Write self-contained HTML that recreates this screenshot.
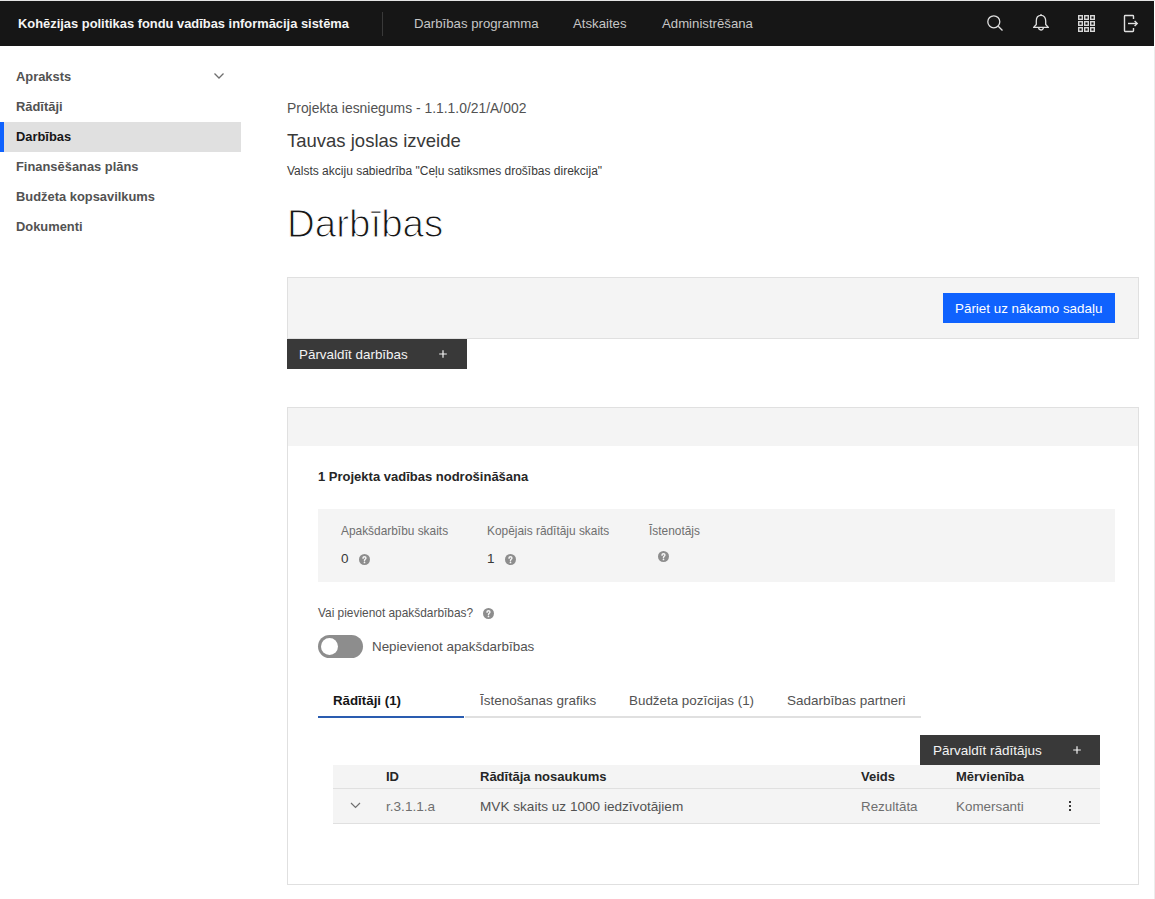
<!DOCTYPE html>
<html><head><meta charset="utf-8">
<style>
html,body{margin:0;padding:0;}
body{width:1155px;height:899px;position:relative;overflow:hidden;background:#fff;font-family:"Liberation Sans",sans-serif;color:#161616;}
.a{position:absolute;white-space:nowrap;}
.t{position:absolute;white-space:nowrap;line-height:20px;height:20px;}
#hdr{position:absolute;left:0;top:1px;width:1154px;height:45px;background:#161616;}
#topline{position:absolute;left:0;top:0;width:1155px;height:1px;background:#e4e4e4;}
#rightline{position:absolute;left:1154px;top:47px;width:1px;height:852px;background:#ececec;}
</style></head>
<body>
<div id="topline"></div>
<div id="hdr"></div>
<div id="rightline"></div>

<!-- header text -->
<div class="t" style="left:18px;top:14px;font-size:12.9px;font-weight:700;color:#f4f4f4;">Kohēzijas politikas fondu vadības informācija sistēma</div>
<div class="a" style="left:382px;top:12px;width:1px;height:24px;background:#393939;"></div>
<div class="t" style="left:414px;top:14px;font-size:13.2px;color:#c6c6c6;">Darbības programma</div>
<div class="t" style="left:573px;top:14px;font-size:13.2px;color:#c6c6c6;">Atskaites</div>
<div class="t" style="left:662px;top:14px;font-size:13.2px;color:#c6c6c6;">Administrēšana</div>


<!-- header icons -->
<svg class="a" style="left:985px;top:14px" width="20" height="20" viewBox="0 0 20 20"><circle cx="8.8" cy="7.8" r="6" fill="none" stroke="#e0e0e0" stroke-width="1.3"/><line x1="13.2" y1="12.2" x2="17.5" y2="16.5" stroke="#e0e0e0" stroke-width="1.3"/></svg>
<svg class="a" style="left:1031px;top:13px" width="20" height="20" viewBox="0 0 20 20"><path d="M10 2.3 C6.6 2.3 5.3 5 5.3 8 L5.3 11.5 L2.6 14.4 L17.4 14.4 L14.7 11.5 L14.7 8 C14.7 5 13.4 2.3 10 2.3 Z" fill="none" stroke="#e0e0e0" stroke-width="1.3" stroke-linejoin="round"/><path d="M7.6 14.6 A2.4 2.4 0 0 0 12.4 14.6" fill="none" stroke="#e0e0e0" stroke-width="1.3"/><line x1="10" y1="1" x2="10" y2="2.4" stroke="#e0e0e0" stroke-width="1.2"/></svg>
<svg class="a" style="left:1077.5px;top:15px" width="18" height="18" viewBox="0 0 18 18" fill="none" stroke="#d8d8d8" stroke-width="1.4"><rect x="0.7" y="0.7" width="3.6" height="3.6"/><rect x="6.7" y="0.7" width="3.6" height="3.6"/><rect x="12.7" y="0.7" width="3.6" height="3.6"/><rect x="0.7" y="6.7" width="3.6" height="3.6"/><rect x="6.7" y="6.7" width="3.6" height="3.6"/><rect x="12.7" y="6.7" width="3.6" height="3.6"/><rect x="0.7" y="12.7" width="3.6" height="3.6"/><rect x="6.7" y="12.7" width="3.6" height="3.6"/><rect x="12.7" y="12.7" width="3.6" height="3.6"/></svg>
<svg class="a" style="left:1122px;top:13px" width="20" height="20" viewBox="0 0 20 20" fill="none" stroke="#e0e0e0" stroke-width="1.4"><path d="M11.5 6 V3.2 Q11.5 2.5 10.8 2.5 H3.2 Q2.5 2.5 2.5 3.2 V17.8 Q2.5 18.5 3.2 18.5 H10.8 Q11.5 18.5 11.5 17.8 V15"/><path d="M6 10.5 H15"/><path d="M12.6 8 L15.2 10.5 L12.6 13"/></svg>
<!-- sidebar chevron -->
<svg class="a" style="left:213px;top:71px" width="12" height="10" viewBox="0 0 12 10" fill="none" stroke="#6f6f6f" stroke-width="1.3"><path d="M1.5 2.5 L6 7 L10.5 2.5"/></svg>

<!-- sidebar -->
<div class="a" style="left:0;top:122px;width:241px;height:30px;background:#e0e0e0;"></div>
<div class="a" style="left:0;top:122px;width:4px;height:30px;background:#0f62fe;"></div>
<div class="t" style="left:16px;top:67px;font-size:12.9px;font-weight:700;color:#525252;">Apraksts</div>
<div class="t" style="left:16px;top:97px;font-size:12.9px;font-weight:700;color:#525252;">Rādītāji</div>
<div class="t" style="left:16px;top:127px;font-size:12.9px;font-weight:700;color:#161616;">Darbības</div>
<div class="t" style="left:16px;top:157px;font-size:12.9px;font-weight:700;color:#525252;">Finansēšanas plāns</div>
<div class="t" style="left:16px;top:187px;font-size:12.9px;font-weight:700;color:#525252;">Budžeta kopsavilkums</div>
<div class="t" style="left:16px;top:217px;font-size:12.9px;font-weight:700;color:#525252;">Dokumenti</div>

<!-- title area -->
<div class="t" style="left:287px;top:98px;font-size:13.9px;color:#525252;">Projekta iesniegums - 1.1.1.0/21/A/002</div>
<div class="t" style="left:287px;top:131px;font-size:18.5px;color:#393939;">Tauvas joslas izveide</div>
<div class="t" style="left:287px;top:161px;font-size:12px;color:#393939;">Valsts akciju sabiedrība "Ceļu satiksmes drošības direkcija"</div>
<div class="a" style="left:287px;top:202px;font-size:38.5px;line-height:44px;color:#161616;-webkit-text-stroke:1.1px #fff;paint-order:normal;">Darbības</div>

<!-- panel 1 -->
<div class="a" style="left:287px;top:277px;width:850px;height:60px;background:#f4f4f4;border:1px solid #e0e0e0;"></div>
<div class="a" style="left:943px;top:293px;width:172px;height:30px;background:#0f62fe;"></div>
<div class="t" style="left:955px;top:299px;font-size:13.4px;color:#fff;">Pāriet uz nākamo sadaļu</div>
<div class="a" style="left:287px;top:339px;width:180px;height:30px;background:#393939;"></div>
<div class="t" style="left:299px;top:345px;font-size:13.4px;color:#f4f4f4;">Pārvaldīt darbības</div>

<!-- panel 2 -->
<div class="a" style="left:287px;top:407px;width:850px;height:476px;background:#fff;border:1px solid #e0e0e0;"></div>
<div class="a" style="left:288px;top:408px;width:850px;height:38px;background:#f4f4f4;"></div>
<div class="t" style="left:318px;top:467px;font-size:13px;font-weight:700;color:#262626;">1 Projekta vadības nodrošināšana</div>

<div class="a" style="left:318px;top:509px;width:797px;height:73px;background:#f4f4f4;"></div>
<div class="t" style="left:341px;top:521px;font-size:11.9px;color:#6f6f6f;">Apakšdarbību skaits</div>
<div class="t" style="left:487px;top:521px;font-size:11.9px;color:#6f6f6f;">Kopējais rādītāju skaits</div>
<div class="t" style="left:649px;top:521px;font-size:11.9px;color:#6f6f6f;">Īstenotājs</div>
<div class="t" style="left:341px;top:549px;font-size:13.5px;color:#393939;">0</div>
<div class="t" style="left:487px;top:549px;font-size:13.5px;color:#393939;">1</div>

<div class="t" style="left:318px;top:603px;font-size:11.9px;color:#525252;">Vai pievienot apakšdarbības?</div>
<div class="a" style="left:318px;top:635px;width:45px;height:23px;border-radius:12px;background:#8d8d8d;"></div>
<div class="a" style="left:320.5px;top:638px;width:17px;height:17px;border-radius:50%;background:#fff;"></div>
<div class="t" style="left:372px;top:637px;font-size:13.4px;color:#525252;">Nepievienot apakšdarbības</div>

<!-- tabs -->
<div class="t" style="left:333px;top:691px;font-size:13.3px;font-weight:700;color:#161616;">Rādītāji (1)</div>
<div class="t" style="left:480px;top:691px;font-size:13.5px;color:#525252;">Īstenošanas grafiks</div>
<div class="t" style="left:629px;top:691px;font-size:13.4px;color:#525252;">Budžeta pozīcijas (1)</div>
<div class="t" style="left:787px;top:691px;font-size:13.5px;color:#525252;">Sadarbības partneri</div>
<div class="a" style="left:318px;top:716px;width:146px;height:2px;background:#2a5cb0;"></div>
<div class="a" style="left:465px;top:716px;width:456px;height:2px;background:#e0e0e0;"></div>

<!-- table -->
<div class="a" style="left:920px;top:735px;width:180px;height:30px;background:#393939;"></div>
<div class="t" style="left:933px;top:741px;font-size:13.5px;color:#f4f4f4;">Pārvaldīt rādītājus</div>
<div class="a" style="left:333px;top:765px;width:767px;height:23px;background:#f4f4f4;border-bottom:1px solid #e0e0e0;"></div>
<div class="a" style="left:333px;top:789px;width:767px;height:34px;background:#f4f4f4;border-bottom:1px solid #e0e0e0;"></div>
<div class="t" style="left:386px;top:767px;font-size:13px;font-weight:700;color:#262626;">ID</div>
<div class="t" style="left:480px;top:767px;font-size:13px;font-weight:700;color:#262626;">Rādītāja nosaukums</div>
<div class="t" style="left:861px;top:767px;font-size:13px;font-weight:700;color:#262626;">Veids</div>
<div class="t" style="left:956px;top:767px;font-size:13px;font-weight:700;color:#262626;">Mērvienība</div>
<div class="t" style="left:386px;top:797px;font-size:13.6px;color:#6f6f6f;">r.3.1.1.a</div>
<div class="t" style="left:480px;top:797px;font-size:13.6px;color:#525252;">MVK skaits uz 1000 iedzīvotājiem</div>
<div class="t" style="left:861px;top:797px;font-size:13.4px;color:#6f6f6f;">Rezultāta</div>
<div class="t" style="left:956px;top:797px;font-size:13.4px;color:#6f6f6f;">Komersanti</div>


<!-- help icons -->
<svg class="a" style="left:358.5px;top:554px" width="11" height="11" viewBox="0 0 16 16"><circle cx="8" cy="8" r="8" fill="#8d8d8d"/><path d="M5.9 6.2 Q5.9 3.9 8 3.9 Q10.1 3.9 10.1 5.9 Q10.1 7.1 8.9 7.7 Q8 8.2 8 9.3 V9.6" fill="none" stroke="#f4f4f4" stroke-width="2.1" stroke-linecap="round"/><circle cx="8" cy="12.2" r="1.25" fill="#f4f4f4"/></svg><svg class="a" style="left:504.5px;top:553.5px" width="11" height="11" viewBox="0 0 16 16"><circle cx="8" cy="8" r="8" fill="#8d8d8d"/><path d="M5.9 6.2 Q5.9 3.9 8 3.9 Q10.1 3.9 10.1 5.9 Q10.1 7.1 8.9 7.7 Q8 8.2 8 9.3 V9.6" fill="none" stroke="#f4f4f4" stroke-width="2.1" stroke-linecap="round"/><circle cx="8" cy="12.2" r="1.25" fill="#f4f4f4"/></svg><svg class="a" style="left:658px;top:551px" width="11" height="11" viewBox="0 0 16 16"><circle cx="8" cy="8" r="8" fill="#8d8d8d"/><path d="M5.9 6.2 Q5.9 3.9 8 3.9 Q10.1 3.9 10.1 5.9 Q10.1 7.1 8.9 7.7 Q8 8.2 8 9.3 V9.6" fill="none" stroke="#f4f4f4" stroke-width="2.1" stroke-linecap="round"/><circle cx="8" cy="12.2" r="1.25" fill="#f4f4f4"/></svg><svg class="a" style="left:483px;top:608px" width="11" height="11" viewBox="0 0 16 16"><circle cx="8" cy="8" r="8" fill="#8d8d8d"/><path d="M5.9 6.2 Q5.9 3.9 8 3.9 Q10.1 3.9 10.1 5.9 Q10.1 7.1 8.9 7.7 Q8 8.2 8 9.3 V9.6" fill="none" stroke="#f4f4f4" stroke-width="2.1" stroke-linecap="round"/><circle cx="8" cy="12.2" r="1.25" fill="#f4f4f4"/></svg>
<!-- plus icons -->
<svg class="a" style="left:438px;top:349px" width="10" height="10" viewBox="0 0 10 10" stroke="#f4f4f4" stroke-width="1.2"><path d="M5 1.2 V8.8 M1.2 5 H8.8"/></svg>
<svg class="a" style="left:1072px;top:745px" width="10" height="10" viewBox="0 0 10 10" stroke="#f4f4f4" stroke-width="1.2"><path d="M5 1.2 V8.8 M1.2 5 H8.8"/></svg>
<!-- table chevron -->
<svg class="a" style="left:349px;top:800px" width="13" height="10" viewBox="0 0 13 10" fill="none" stroke="#6f6f6f" stroke-width="1.2"><path d="M2 3 L6.5 7.5 L11 3"/></svg>
<!-- kebab -->
<div class="a" style="left:1069px;top:801px;width:2px;height:2px;background:#393939;"></div>
<div class="a" style="left:1069px;top:805px;width:2px;height:2px;background:#393939;"></div>
<div class="a" style="left:1069px;top:809px;width:2px;height:2px;background:#393939;"></div>
</body></html>
